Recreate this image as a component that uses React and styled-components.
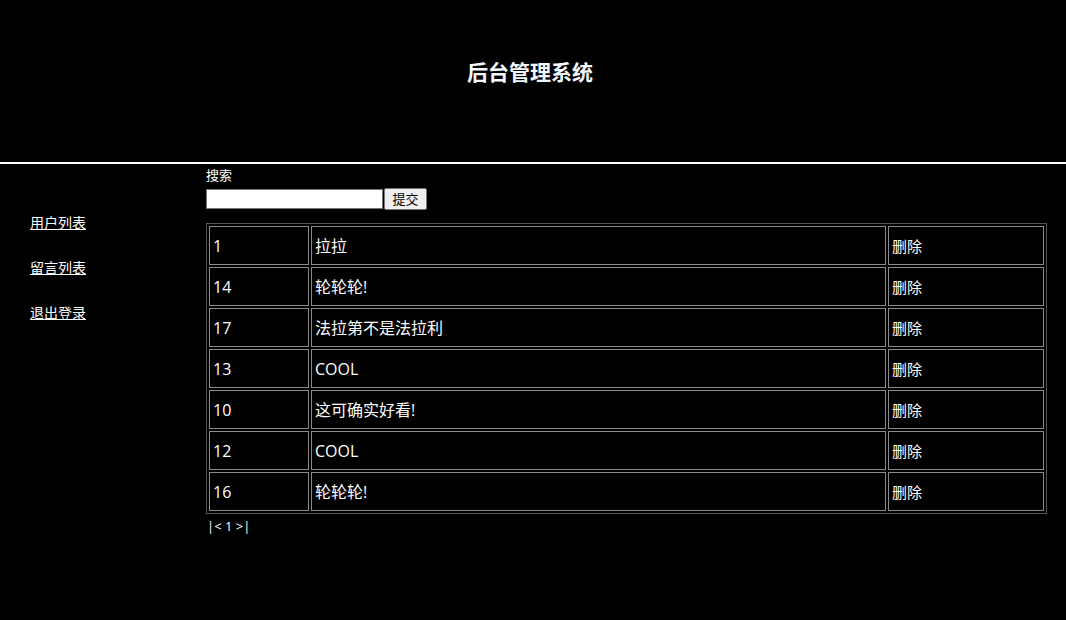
import styled, { createGlobalStyle } from "styled-components";

const rows = [
  { id: 1, text: "拉拉" },
  { id: 14, text: "轮轮轮!" },
  { id: 17, text: "法拉第不是法拉利" },
  { id: 13, text: "COOL" },
  { id: 10, text: "这可确实好看!" },
  { id: 12, text: "COOL" },
  { id: 16, text: "轮轮轮!" },
];

export default function App() {
  return (
    <>
      <GlobalStyle />
      <Header>
        <Title>后台管理系统</Title>
      </Header>
      <Body>
        <Sidebar>
          <NavLink href="#">用户列表</NavLink>
          <NavLink href="#">留言列表</NavLink>
          <NavLink href="#">退出登录</NavLink>
        </Sidebar>
        <Main>
          <SearchLabel>搜索</SearchLabel>
          <SearchRow>
            <SearchInput type="text" />
            <SubmitBtn type="button">提交</SubmitBtn>
          </SearchRow>
          <Table>
            <tbody>
              {rows.map((row, i) => (
                <tr key={i}>
                  <IdCell>{row.id}</IdCell>
                  <Cell>{row.text}</Cell>
                  <ActionCell>删除</ActionCell>
                </tr>
              ))}
            </tbody>
          </Table>
          <Pager>|&lt; 1 &gt;|</Pager>
        </Main>
      </Body>
    </>
  );
}

const GlobalStyle = createGlobalStyle`
  html, body {
    margin: 0;
    padding: 0;
    background: #000;
    color: #fff;
    font-family: "Open Sans", "Noto Sans CJK SC", sans-serif;
  }
  body {
    height: 620px;
    overflow: hidden;
  }
`;

const Header = styled.header`
  height: 162px;
  border-bottom: 2px solid #fff;
  display: flex;
  justify-content: center;
  padding-right: 6px;
  box-sizing: content-box;
`;

const Title = styled.h1`
  margin: 58px 0 0;
  font-size: 21px;
  font-weight: 700;
  line-height: 26px;
  color: #f4f8ff;
  font-family: "Noto Sans CJK SC", sans-serif;
`;

const Body = styled.div`
  display: flex;
`;

const Sidebar = styled.nav`
  width: 206px;
  flex-shrink: 0;
  display: flex;
  flex-direction: column;
  gap: 25px;
  padding: 48px 0 0 30px;
  box-sizing: border-box;
`;

const NavLink = styled.a`
  color: #fff;
  font-size: 14px;
  line-height: 20px;
  text-decoration: underline;
  font-family: "Noto Sans CJK SC", sans-serif;
  align-self: flex-start;
`;

const Main = styled.main`
  width: 841px;
  padding-top: 2px;
`;

const SearchLabel = styled.div`
  font-size: 13px;
  line-height: 18px;
  font-family: "Noto Sans CJK SC", sans-serif;
`;

const SearchRow = styled.div`
  display: flex;
  align-items: center;
  gap: 1px;
  margin-top: 4px;
`;

const SearchInput = styled.input`
  width: 177px;
  height: 20px;
  box-sizing: border-box;
  border: 1px solid #767676;
  background: #fff;
  padding: 0 2px;
  outline: none;
`;

const SubmitBtn = styled.button`
  height: 22px;
  width: 43px;
  box-sizing: border-box;
  padding: 0 6px;
  font-size: 13px;
  font-family: "Noto Sans CJK SC", sans-serif;
  color: #000;
  background: #efefef;
  border: 1px solid #767676;
  border-radius: 2px;
  line-height: 18px;
`;

const Table = styled.table`
  margin-top: 13px;
  width: 841px;
  border: 1px solid #555;
  border-spacing: 2px;
  table-layout: fixed;
`;

const Cell = styled.td`
  height: 39px;
  box-sizing: border-box;
  border: 1px solid #8a8a8a;
  padding: 0 3px;
  font-size: 16px;
  line-height: 20px;
  color: #fff;
  vertical-align: middle;
`;

const IdCell = styled(Cell)`
  width: 100px;
`;

const ActionCell = styled(Cell)`
  width: 156px;
  font-size: 15px;
`;

const Pager = styled.div`
  margin-top: 3px;
  padding-left: 1px;
  font-size: 13px;
  line-height: 18px;
  color: #fff;
`;
